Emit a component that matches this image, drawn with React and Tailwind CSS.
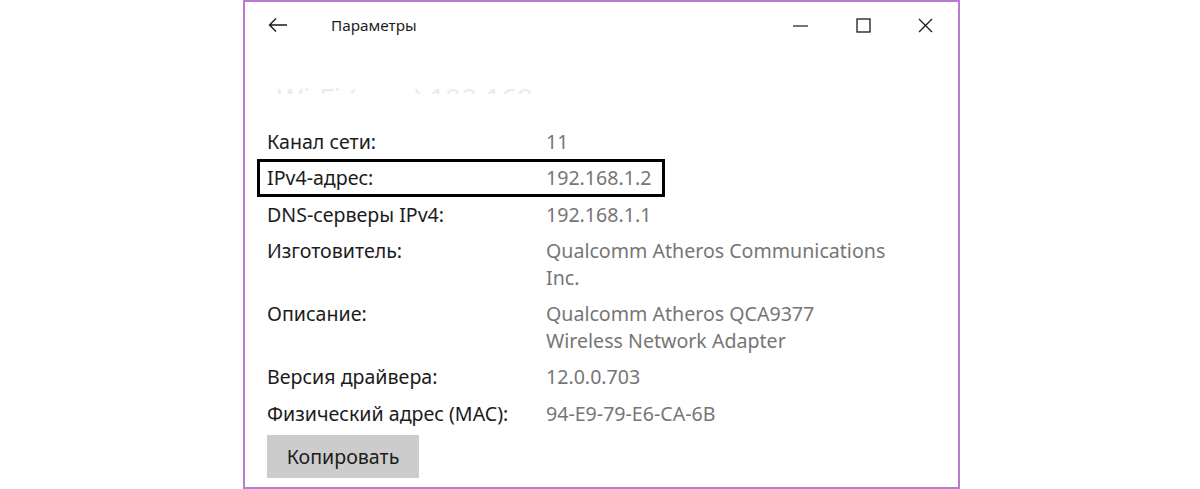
import React from "react";

const rows = [
  { label: "Канал сети:", value: ["11"] },
  { label: "IPv4-адрес:", value: ["192.168.1.2"], boxed: true },
  { label: "DNS-серверы IPv4:", value: ["192.168.1.1"] },
  { label: "Изготовитель:", value: ["Qualcomm Atheros Communications", "Inc."] },
  { label: "Описание:", value: ["Qualcomm Atheros QCA9377", "Wireless Network Adapter"] },
  { label: "Версия драйвера:", value: ["12.0.0.703"] },
  { label: "Физический адрес (MAC):", value: ["94-E9-79-E6-CA-6B"] },
];

function App() {
  return (
    <div className="w-[1200px] h-[489px] bg-white overflow-hidden" style={{ fontFamily: '"Noto Sans", "Open Sans", sans-serif' }}>
      <div className="ml-[243px] w-[717px] h-[489px] border-2 border-[#b97ad4] flex flex-col bg-white">
        {/* Title bar */}
        <div className="h-[46px] flex items-center shrink-0">
          <div className="w-[86px] pl-[23px] flex items-center">
            <svg width="20" height="16" viewBox="0 0 20 16" fill="none" stroke="#1a1a1a" strokeWidth="1.4">
              <path d="M19 8H1.5M8 1.5L1.5 8L8 14.5" />
            </svg>
          </div>
          <span className="text-[15.3px] text-[#1e1e1e]">Параметры</span>
          <div className="ml-auto flex items-center">
            <div className="w-[63px] flex justify-center">
              <svg width="15" height="15" viewBox="0 0 15 15" stroke="#1a1a1a" strokeWidth="1.2">
                <path d="M0 8H15" />
              </svg>
            </div>
            <div className="w-[63px] flex justify-center">
              <svg width="15" height="15" viewBox="0 0 15 15" fill="none" stroke="#1a1a1a" strokeWidth="1.3">
                <rect x="1" y="1" width="13" height="13" />
              </svg>
            </div>
            <div className="w-[63px] flex justify-center pr-[2px]">
              <svg width="15" height="15" viewBox="0 0 15 15" stroke="#1a1a1a" strokeWidth="1.3">
                <path d="M1 1L14 14M14 1L1 14" />
              </svg>
            </div>
          </div>
        </div>

        {/* Faded heading scrolled under header */}
        <div className="h-[46px] overflow-hidden shrink-0 pl-[32px]">
          <div className="pt-[36px] text-[28px] leading-none text-[#ebebeb] whitespace-nowrap">
            Wi-Fi (сеть)        192.168
          </div>
        </div>

        {/* Properties */}
        <div className="pl-[22px] mt-[34px] flex flex-col gap-y-[9.3px] text-[19.6px] leading-[27px]">
          {rows.map((r) => (
            <div key={r.label} className="relative flex">
              {r.boxed && (
                <div className="absolute -left-[10px] -top-[5px] w-[408px] h-[38px] border-[3px] border-black" />
              )}
              <div className="w-[279px] shrink-0 text-[#1c1c1c] whitespace-nowrap">{r.label}</div>
              <div className="text-[#767676] whitespace-nowrap">
                {r.value.map((v) => (
                  <div key={v}>{v}</div>
                ))}
              </div>
            </div>
          ))}
          <button className="-mt-[1px] w-[152px] h-[43px] bg-[#cccccc] text-[19.6px] text-[#1c1c1c]">
            Копировать
          </button>
        </div>
      </div>
    </div>
  );
}

export default App;
